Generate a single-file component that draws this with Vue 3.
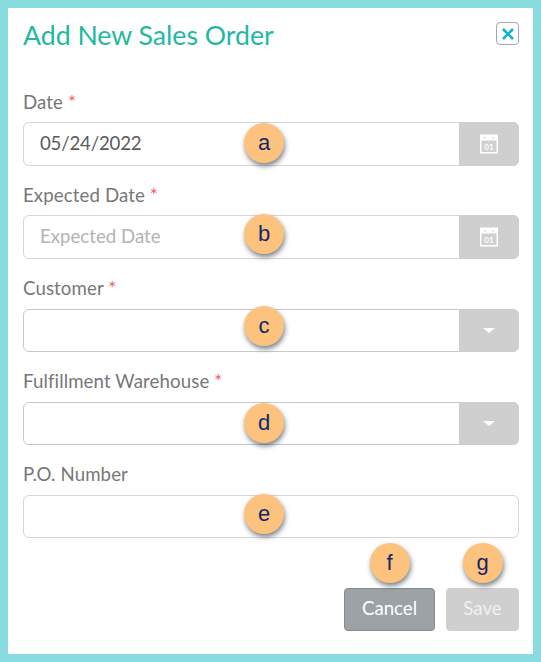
<template>
  <div class="modal">
    <div class="modal-head">
      <h2>Add New Sales Order</h2>
      <button class="close-btn" type="button" aria-label="Close">
        <svg width="14" height="14" viewBox="0 0 14 14">
          <path d="M2 2 L12 12 M12 2 L2 12" stroke="#14afd3" stroke-width="2.6" fill="none" />
        </svg>
      </button>
    </div>

    <form class="form" @submit.prevent>
      <div v-for="field in fields" :key="field.label" class="field">
        <label>
          {{ field.label }}
          <span v-if="field.required" class="req">*</span>
        </label>
        <div class="control" :class="{ short: field.type !== 'date', select: field.type === 'select' }">
          <input type="text" :value="field.value" :placeholder="field.placeholder" />
          <span v-if="field.type === 'date'" class="addon">
            <svg class="cal" width="20" height="20" viewBox="0 0 20 20">
              <rect x="1" y="0.5" width="18" height="19" fill="#fff" />
              <rect x="2.5" y="6.5" width="15" height="11.5" fill="#cfcfcf" />
              <rect x="5" y="3" width="1.5" height="1.5" fill="#cfcfcf" />
              <rect x="13.5" y="3" width="1.5" height="1.5" fill="#cfcfcf" />
              <text x="10" y="16" text-anchor="middle" class="cal-day">01</text>
            </svg>
          </span>
          <span v-if="field.type === 'select'" class="addon">
            <span class="caret"></span>
          </span>
          <span class="badge" :class="field.badgeClass">{{ field.badge }}</span>
        </div>
      </div>

      <div class="actions">
        <div class="action">
          <button class="btn cancel" type="button">Cancel</button>
          <span class="badge over-btn">f</span>
        </div>
        <div class="action">
          <button class="btn save" type="button">Save</button>
          <span class="badge over-btn">g</span>
        </div>
      </div>
    </form>
  </div>
</template>

<script setup>
const fields = [
  { label: 'Date', required: true, type: 'date', value: '05/24/2022', badge: 'a', badgeClass: 'b-a' },
  { label: 'Expected Date', required: true, type: 'date', placeholder: 'Expected Date', badge: 'b', badgeClass: 'b-b' },
  { label: 'Customer', required: true, type: 'select', badge: 'c', badgeClass: 'b-c' },
  { label: 'Fulfillment Warehouse', required: true, type: 'select', badge: 'd', badgeClass: 'b-d' },
  { label: 'P.O. Number', required: false, type: 'text', badge: 'e', badgeClass: 'b-e' }
]
</script>

<style>
html, body {
  margin: 0;
  background: #fff;
}
</style>

<style scoped>
.modal {
  box-sizing: border-box;
  width: 541px;
  height: 662px;
  border: 8px solid #88dbdf;
  background: #fff;
  padding: 0 14px 0 15px;
  font-family: Lato, "Liberation Sans", sans-serif;
}

.modal-head {
  display: flex;
  justify-content: space-between;
  align-items: flex-start;
  height: 79px;
}

.modal-head h2 {
  margin: 9px 0 0;
  font-size: 26.67px;
  font-weight: 400;
  line-height: 36px;
  color: #1fb9a1;
}

.close-btn {
  display: flex;
  align-items: center;
  justify-content: center;
  width: 23px;
  height: 23px;
  margin-top: 14px;
  padding: 0;
  border: 1px solid #a3a8ab;
  border-radius: 4px;
  background: #fff;
}

.field {
  height: 93px;
}

.field label {
  display: block;
  height: 35px;
  font-size: 18.67px;
  line-height: 30px;
  letter-spacing: 0.1px;
  color: #777;
}

.req {
  color: #f0606e;
  font-size: 18.67px;
}

.control {
  position: relative;
  display: flex;
  box-sizing: border-box;
  height: 44px;
  border: 1px solid #d6d6d6;
  border-radius: 6px;
}

.control.short {
  height: 43px;
  margin-top: 1px;
}

.control.select {
  border-color: #c8c8c8;
}

.control input {
  flex: 1;
  min-width: 0;
  box-sizing: border-box;
  border: none;
  outline: none;
  background: transparent;
  padding: 0 16px 2px;
  font-family: inherit;
  font-size: 18.67px;
  color: #5b5b5b;
}

.control input:not(:placeholder-shown) {
  letter-spacing: -0.2px;
}

.control input::placeholder {
  color: #b3b3b3;
}

.addon {
  display: flex;
  align-items: center;
  justify-content: center;
  width: 60px;
  margin: -1px -1px -1px 0;
  background: #cfcfcf;
  border-radius: 0 6px 6px 0;
}

.cal {
  margin: -1px 1px 0 0;
}

.cal-day {
  font-family: Lato, "Liberation Sans", sans-serif;
  font-size: 8px;
  font-weight: 700;
  fill: #fff;
}

.caret {
  width: 0;
  height: 0;
  border-left: 6px solid transparent;
  border-right: 6px solid transparent;
  border-top: 5px solid #fff;
}

.badge {
  position: absolute;
  left: 220px;
  display: flex;
  align-items: center;
  justify-content: center;
  width: 40px;
  height: 40px;
  border-radius: 50%;
  background: #fdc27d;
  box-shadow: 1px 3px 5px rgba(40, 50, 60, 0.6);
  font-family: "Liberation Sans", Arial, sans-serif;
  font-size: 22px;
  color: #12286b;
}

.b-a { top: 0; }
.b-b { top: -2px; }
.b-c { top: -4px; }
.b-d { top: 0; }
.b-e { top: -2px; }

.actions {
  display: flex;
  justify-content: flex-end;
  gap: 11px;
  margin-top: 36px;
}

.action {
  position: relative;
}

.btn {
  display: block;
  box-sizing: border-box;
  height: 43px;
  padding: 0 0 3px;
  border-radius: 4px;
  font-family: inherit;
  font-size: 18.67px;
  color: #fff;
}

.cancel {
  width: 91px;
  background: #9da2a6;
  border: 1px solid #858a8e;
}

.save {
  width: 73px;
  background: #cfcfcf;
  border: 1px solid #cfcfcf;
  color: #f1f1f1;
}

.over-btn {
  top: -45px;
  left: 50%;
  margin-left: -20px;
}
</style>
